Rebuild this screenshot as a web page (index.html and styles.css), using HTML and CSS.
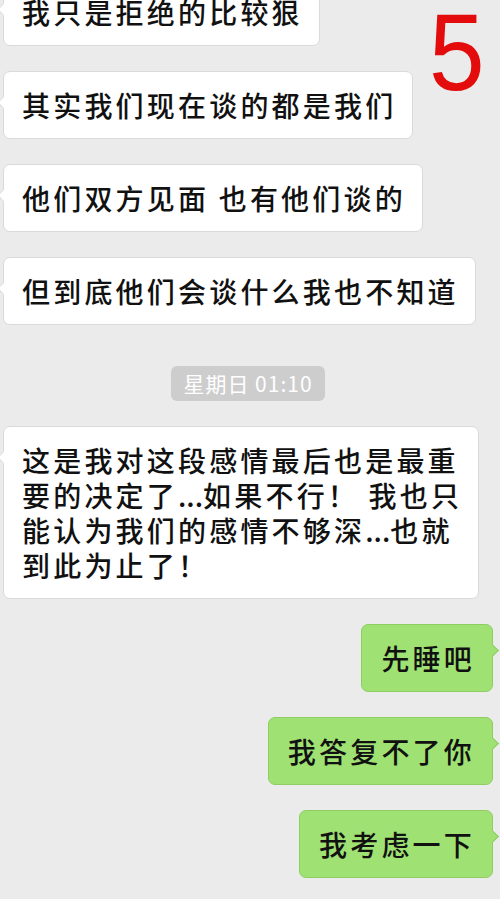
FILE: index.html
```html
<!DOCTYPE html>
<html lang="zh-CN">
<head>
<meta charset="utf-8">
<title>聊天记录</title>
<link rel="stylesheet" href="styles.css">
</head>
<body>
<div class="screen">
  <div class="chat">
    <div class="row left"><div class="bubble white">我只是拒绝的比较狠</div></div>
    <div class="row left"><div class="bubble white">其实我们现在谈的都是我们</div></div>
    <div class="row left"><div class="bubble white">他们双方见面 也有他们谈的</div></div>
    <div class="row left"><div class="bubble white">但到底他们会谈什么我也不知道</div></div>
    <div class="row center"><div class="time">星期日 01:10</div></div>
    <div class="row left"><div class="bubble white">这是我对这段感情最后也是最重<br>要的决定了<span class="dots">...</span>如果不行！ 我也只<br>能认为我们的感情不够深<span class="dots">...</span>也就<br>到此为止了！</div></div>
    <div class="row right"><div class="bubble green">先睡吧</div></div>
    <div class="row right"><div class="bubble green">我答复不了你</div></div>
    <div class="row right"><div class="bubble green">我考虑一下</div></div>
  </div>
  <div class="mark">5</div>
</div>
</body>
</html>
```

FILE: styles.css
```css
* { box-sizing: border-box; }
html, body {
  margin: 0;
  padding: 0;
  background: #ebebeb;
}
body {
  width: 500px;
  height: 899px;
  overflow: hidden;
  font-family: "Noto Sans CJK SC", "Noto Sans", sans-serif;
  color: #111;
}
.screen {
  position: relative;
  width: 500px;
  height: 899px;
  overflow: hidden;
}
.chat {
  display: flex;
  flex-direction: column;
  gap: 25px;
  margin-top: -22px;
  padding: 0 7px 0 3px;
}
.row { display: flex; }
.row.left { justify-content: flex-start; }
.row.right { justify-content: flex-end; }
.row.center { justify-content: center; margin-top: 16px; }

.bubble {
  position: relative;
  max-width: 477px;
  font-size: 28px;
  font-weight: 500;
  letter-spacing: 3.2px;
  line-height: 35px;
  padding: 16px 16px 15px 18px;
  border-radius: 7px;
  white-space: nowrap;
}
.dots { letter-spacing: 0; }
.bubble.white {
  background: #ffffff;
  border: 1px solid #dadada;
}
.bubble.white::before {
  content: "";
  position: absolute;
  left: -5px;
  top: 26px;
  width: 8px;
  height: 8px;
  background: #ffffff;
  border-left: 1px solid #dadada;
  border-bottom: 1px solid #dadada;
  transform: rotate(45deg);
}
.bubble.green {
  background: #9fe172;
  border: 1px solid #8fcd63;
  padding-left: 19px;
  padding-right: 17px;
}
.bubble.green::after {
  content: "";
  position: absolute;
  right: -5px;
  top: 21px;
  width: 8px;
  height: 8px;
  background: #9fe172;
  border-right: 1px solid #8fcd63;
  border-top: 1px solid #8fcd63;
  transform: rotate(45deg);
}
.time {
  background: #cdcdcd;
  color: #ffffff;
  font-size: 21px;
  line-height: 35px;
  height: 35px;
  width: 154px;
  text-align: center;
  border-radius: 6px;
  letter-spacing: 1px;
}
.mark {
  position: absolute;
  left: 429px;
  top: -4px;
  font-family: "Liberation Sans", Arial, sans-serif;
  font-size: 100px;
  line-height: 1;
  color: #e30b0b;
  transform: scaleY(1.1);
  transform-origin: top left;
}
```
